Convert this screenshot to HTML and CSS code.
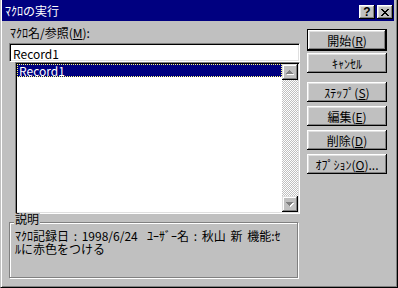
FILE: index.html
```html
<!DOCTYPE html>
<html lang="ja">
<head>
  <meta charset="UTF-8" />
  <title>ﾏｸﾛの実行</title>
  <link rel="stylesheet" href="styles.css">
</head>
<body>
  <div class="window">
    <div class="titlebar">
      <span class="title">ﾏｸﾛの実行</span>
      <div class="title-buttons">
        <span class="tbtn help">?</span>
        <span class="tbtn close">
          <svg width="8" height="7" viewBox="0 0 8 7" shape-rendering="crispEdges">
            <path d="M0 0h2v1h-2zM6 0h2v1h-2zM1 1h2v1h-2zM5 1h2v1h-2zM2 2h4v1h-4zM3 3h2v1h-2zM2 4h4v1h-4zM1 5h2v1h-2zM5 5h2v1h-2zM0 6h2v1h-2zM6 6h2v1h-2z" fill="#000"/>
          </svg>
        </span>
      </div>
    </div>

    <div class="dialog">
      <div class="main">
        <label class="caption" for="macro">ﾏｸﾛ名/参照(<u>M</u>):</label>
        <div class="textbox" id="macro">Record1</div>

        <div class="listbox">
          <div class="items">
            <div class="item selected">Record1</div>
          </div>
          <div class="vscroll">
            <div class="sbtn">
              <svg width="8" height="5" viewBox="0 0 8 5" shape-rendering="crispEdges">
                <path d="M4 1h1v1h-1zM3 2h3v1h-3zM2 3h5v1h-5zM1 4h7v1h-7z" fill="#fff"/>
                <path d="M3 0h1v1h-1zM2 1h3v1h-3zM1 2h5v1h-5zM0 3h7v1h-7z" fill="#808080"/>
              </svg>
            </div>
            <div class="track"></div>
            <div class="sbtn">
              <svg width="8" height="5" viewBox="0 0 8 5" shape-rendering="crispEdges">
                <path d="M1 1h7v1h-7zM2 2h5v1h-5zM3 3h3v1h-3zM4 4h1v1h-1z" fill="#fff"/>
                <path d="M0 0h7v1h-7zM1 1h5v1h-5zM2 2h3v1h-3zM3 3h1v1h-1z" fill="#808080"/>
              </svg>
            </div>
          </div>
        </div>

        <div class="group">
          <span class="group-title">説明</span>
          <p class="desc">ﾏｸﾛ記録日 : 1998/6/24  ﾕｰｻﾞｰ名 : 秋山 新 機能:ｾﾙに赤色をつける</p>
        </div>
      </div>

      <div class="buttons">
        <button type="button" class="btn default">開始(<u>R</u>)</button>
        <button type="button" class="btn cancel">ｷｬﾝｾﾙ</button>
        <button type="button" class="btn step">ｽﾃｯﾌﾟ(<u>S</u>)</button>
        <button type="button" class="btn">編集(<u>E</u>)</button>
        <button type="button" class="btn">削除(<u>D</u>)</button>
        <button type="button" class="btn">ｵﾌﾟｼｮﾝ(<u>O</u>)...</button>
      </div>
    </div>
  </div>
</body>
</html>
```

FILE: styles.css
```css
* {
  box-sizing: border-box;
}
body {
  margin: 0;
  font-family: "Noto Sans CJK JP", sans-serif;
  font-size: 12px;
  line-height: 13px;
  color: #000;
  background: #c0c0c0;
}
.window {
  width: 398px;
  height: 288px;
  background: #c0c0c0;
  border-left: 1px solid #c0c0c0;
  border-right: 1px solid #000;
  border-bottom: 1px solid #000;
  box-shadow: inset 1px 0 #fff, inset -1px -1px #808080;
  padding: 0 3px 3px 1px;
  display: flex;
  flex-direction: column;
}
.titlebar {
  height: 21px;
  flex: none;
  background: #000080;
  color: #fff;
  display: flex;
  align-items: flex-end;
  justify-content: space-between;
  padding: 0 1px 2px 3px;
}
.title {
  align-self: center;
  margin-top: 2px;
}
.title-buttons {
  display: flex;
  gap: 2px;
}
.tbtn {
  width: 16px;
  height: 14px;
  background: #c0c0c0;
  color: #000;
  box-shadow: inset -1px -1px #000, inset 1px 1px #fff, inset -2px -2px #808080, inset 2px 2px #dfdfdf;
  display: flex;
  align-items: center;
  justify-content: center;
}
.help {
  font-family: "Liberation Sans", sans-serif;
  font-weight: bold;
  font-size: 12px;
}
.dialog {
  flex: 1;
  display: flex;
  padding: 0 7px;
}
.main {
  width: 291px;
  display: flex;
  flex-direction: column;
}
.caption {
  display: block;
  margin: 5px 0 4px 1px;
}
.textbox {
  height: 19px;
  background: #fff;
  border: 1px solid;
  border-color: #808080 #fff #fff #808080;
  box-shadow: inset 1px 1px #000, inset -1px -1px #dfdfdf;
  padding: 3px 0 0 3px;
}
.listbox {
  margin-left: 6px;
  height: 152px;
  display: flex;
  border: 1px solid;
  border-color: #808080 #fff #fff #808080;
  box-shadow: inset 1px 1px #000, inset -1px -1px #dfdfdf;
  padding: 1px;
}
.items {
  flex: 1;
  background: #fff;
}
.item {
  height: 13px;
  line-height: 11px;
  padding-left: 1px;
}
.item.selected {
  background: #000080;
  color: #fff;
  border: 1px dotted #ffff80;
}
.vscroll {
  width: 16px;
  display: flex;
  flex-direction: column;
}
.sbtn {
  height: 16px;
  background: #c0c0c0;
  box-shadow: inset -1px -1px #000, inset 1px 1px #dfdfdf, inset -2px -2px #808080, inset 2px 2px #fff;
  display: flex;
  align-items: center;
  justify-content: center;
}
.track {
  flex: 1;
  background: repeating-conic-gradient(#c0c0c0 0 25%, #fff 0 50%) 0 0 / 2px 2px;
}
.group {
  position: relative;
  margin-top: 8px;
  width: 289px;
  height: 56px;
  border: 1px solid #808080;
  box-shadow: 1px 1px #fff, inset 1px 1px #fff;
  padding: 6px 0 0 5px;
}
.group-title {
  position: absolute;
  left: 4px;
  top: -10px;
  padding: 0 1px;
  line-height: 12px;
  background: #c0c0c0;
}
.desc {
  width: 270px;
  margin: 0;
  white-space: pre-wrap;
  word-break: break-all;
  word-spacing: 2px;
}
.buttons {
  width: 80px;
  margin-left: 7px;
  padding-top: 8px;
  display: flex;
  flex-direction: column;
}
.btn {
  height: 20px;
  margin-top: 4px;
  padding: 0;
  border: none;
  font: inherit;
  color: #000;
  background: #c0c0c0;
  box-shadow: inset -1px -1px #000, inset 1px 1px #fff, inset -2px -2px #808080, inset 2px 2px #dfdfdf;
  display: flex;
  align-items: center;
  justify-content: center;
}
.btn.default {
  height: 22px;
  margin-top: 0;
  border: 1px solid #000;
}
.btn.cancel {
  margin-top: 2px;
}
.btn.step {
  margin-top: 9px;
}
```
